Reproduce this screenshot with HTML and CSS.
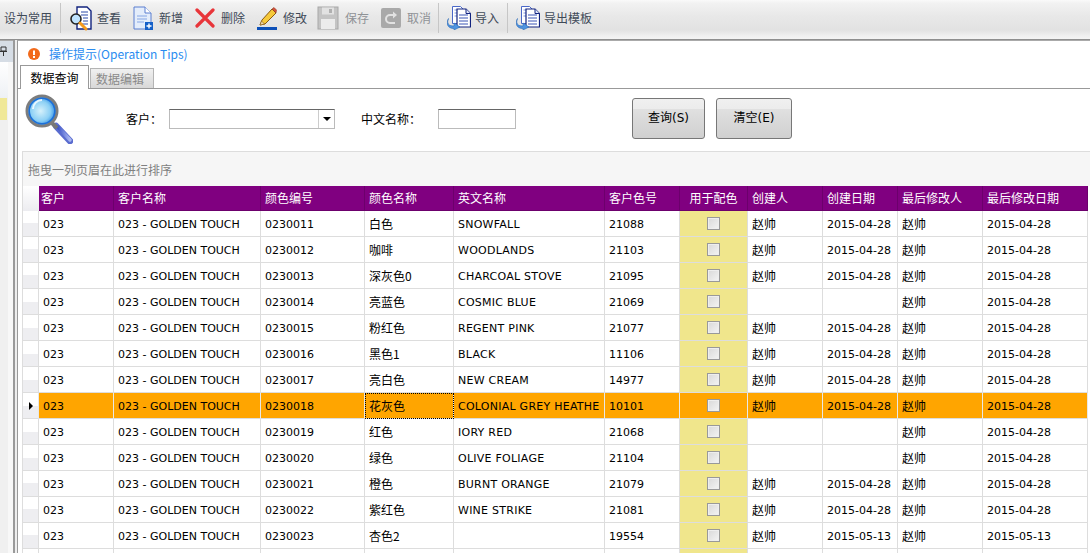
FILE: index.html
```html
<!DOCTYPE html>
<html lang="zh-CN">
<head>
<meta charset="utf-8">
<title>数据查询</title>
<link rel="stylesheet" href="styles.css">
</head>
<body>
<svg class="defs" width="0" height="0">
  <defs>
    <symbol id="ico-import" viewBox="0 0 24 24">
      <path d="M5.500 .5h8l3 3v14h-11z" fill="#fff" stroke="#4a68c8"/>
      <path d="M7.500 4h5M7.500 7h6M7.500 10h6" stroke="#7d95dc"/>
      <path d="M10 3h9l4.500 4.500V21H10z" fill="#fff" stroke="#12237e" stroke-width="1.200"/>
      <path d="M19 3v4.500h4.500" fill="#dfe6fa" stroke="#12237e"/>
      <path d="M12 9h9M12 12h9M12 15h9M12 18h9" stroke="#3a55b5"/>
      <path d="M1.500 12.500c-2 5 0 7.500 5.500 7.500v-3l6 4-6 3v-1.500c-6 0-8.500-4.500-5.500-10z" fill="#4f94e0" stroke="#2d6cb8" stroke-width=".6"/>
    </symbol>
  </defs>
</svg>
<div class="app">
  <header class="toolbar">
    <span class="tool first"><span class="t">设为常用</span></span>
    <i class="sep s1"></i>
    <span class="tool w-view">
      <svg class="ico i-view" viewBox="0 0 24 26"><path d="M8 2h10l4 4v18H8z" fill="#fff" stroke="#12237e" stroke-width="1.400"/><path d="M12 7h7M12 10h7M14 13h5M14 16h5M12 19h7" stroke="#2d4aa8" stroke-width="1.200"/><circle cx="7" cy="14" r="5" fill="#bfe3ff" stroke="#222" stroke-width="1.600"/><path d="M11 18l6 6" stroke="#f59a1c" stroke-width="3" stroke-linecap="round"/></svg>
      <span class="t">查看</span>
    </span>
    <span class="tool w-new">
      <svg class="ico i-new" viewBox="0 0 20 24"><path d="M1 1h11l6 6v16H1z" fill="#e4edfb" stroke="#5b7fd0"/><path d="M12 1v6h6" fill="#fff" stroke="#5b7fd0"/><path d="M4 10h10M4 13h10M4 16h7" stroke="#86a6e4"/><rect x="12" y="16" width="8" height="8" fill="#1560c8"/><path d="M16 17.500v5M13.500 20h5" stroke="#fff" stroke-width="1.400"/></svg>
      <span class="t">新增</span>
    </span>
    <span class="tool w-del">
      <svg class="ico i-del" viewBox="0 0 20 20"><path d="M2 2l16 16M18 2L2 18" stroke="#e8353a" stroke-width="3.200" stroke-linecap="round"/></svg>
      <span class="t">删除</span>
    </span>
    <span class="tool w-edit">
      <svg class="ico i-edit" viewBox="0 0 20 24"><path d="M5 14L15 3l4 4L8 18l-5 1z" fill="#f6c93a" stroke="#8a5a12"/><path d="M15 3l2-1.500 2.500 2.500-.5 3z" fill="#d8503c" stroke="#8a3a22" stroke-width=".6"/><path d="M3 19l1.500-4 3 3z" fill="#f3dcb0" stroke="#8a5a12" stroke-width=".6"/><rect x="0" y="21" width="20" height="3" fill="#0d50b8"/></svg>
      <span class="t">修改</span>
    </span>
    <span class="tool w-save off">
      <svg class="ico i-save" viewBox="0 0 22 24"><rect x="1" y="1" width="20" height="22" fill="#c4c4c4" stroke="#a8a8a8"/><rect x="5" y="1.500" width="12" height="7" fill="#e2e2e2"/><rect x="12" y="3" width="3" height="4" fill="#b0b0b0"/><rect x="4" y="13" width="14" height="10" fill="#ececec"/></svg>
      <span class="t">保存</span>
    </span>
    <span class="tool w-undo off">
      <svg class="ico i-undo" viewBox="0 0 20 20"><rect width="20" height="20" rx="2" fill="#a9a9a9"/><path d="M14 7H9a4 4 0 0 0 0 8h5" fill="none" stroke="#e2e2e2" stroke-width="2"/><path d="M12 3.500l4 3.500-4 3.500z" fill="#e2e2e2"/></svg>
      <span class="t">取消</span>
    </span>
    <i class="sep s2"></i>
    <span class="tool w-imp">
      <svg class="ico i-imp"><use href="#ico-import"/></svg>
      <span class="t">导入</span>
    </span>
    <i class="sep s3"></i>
    <span class="tool w-exp">
      <svg class="ico i-imp"><use href="#ico-import"/></svg>
      <span class="t">导出模板</span>
    </span>
  </header>

  <div class="main">
    <aside class="side">
      <div class="side-head">
        <svg class="pin" viewBox="0 0 7 10"><path d="M1 1h5v4H1zM0 5.500h7M3.500 5.500V10" fill="none" stroke="#333"/></svg>
      </div>
      <div class="side-body">
        <div class="side-light"></div>
        <div class="side-pick"></div>
      </div>
    </aside>
    <div class="splitter"></div>

    <section class="panel">
      <div class="tips">
        <svg class="tip-ico" viewBox="0 0 12 12"><circle cx="6" cy="6" r="6" fill="#f26a1b"/><rect x="5" y="2.500" width="2" height="4.500" fill="#fff"/><rect x="5" y="8" width="2" height="2" fill="#fff"/></svg>
        <span class="tip-text">操作提示(Operation Tips)</span>
      </div>
      <nav class="tabs">
        <span class="tab active">数据查询</span>
        <span class="tab next">数据编辑</span>
      </nav>

      <div class="filter">
        <svg class="lens" viewBox="0 0 48 50">
          <defs>
            <radialGradient id="gl" cx=".45" cy=".5" r=".55"><stop offset="0" stop-color="#d6f1fb"/><stop offset=".6" stop-color="#8cd0f5"/><stop offset="1" stop-color="#1c7fe0"/></radialGradient>
            <linearGradient id="gh" x1="0" y1="0" x2="1" y2="0"><stop offset="0" stop-color="#3f56c8"/><stop offset="1" stop-color="#aab8f2"/></linearGradient>
          </defs>
          <path d="M31 32l14 15" stroke="#5a6ccf" stroke-width="6.500" stroke-linecap="round"/>
          <path d="M33 33l12 13" stroke="url(#gh)" stroke-width="3.500" stroke-linecap="round"/>
          <path d="M27 29l5 5" stroke="#777" stroke-width="4"/>
          <circle cx="17" cy="17" r="15" fill="url(#gl)" stroke="#7d7d7d" stroke-width="3"/>
          <circle cx="17" cy="17" r="12.800" fill="none" stroke="#1c6fd8" stroke-width="1.600"/>
          <path d="M8 15a9 9 0 0 1 9-9" fill="none" stroke="#fff" stroke-width="2" opacity=".8"/>
        </svg>
        <label class="lbl lbl-cust">客户：</label>
        <div class="combo"><span class="combo-btn"><i class="caret"></i></span></div>
        <label class="lbl lbl-cn">中文名称：</label>
        <div class="textbox"></div>
        <button class="btn btn-q">查询(S)</button>
        <button class="btn btn-c">清空(E)</button>
      </div>

      <div class="grid">
        <div class="group">拖曳一列页眉在此进行排序</div>
        <table class="table">
          <colgroup>
            <col class="c0"><col class="c1"><col class="c2"><col class="c3"><col class="c4"><col class="c5"><col class="c6"><col class="c7"><col class="c8"><col class="c9"><col class="c10"><col class="c11">
          </colgroup>
          <thead>
            <tr><th class="corner"></th><th class="firstcol">客户</th><th>客户名称</th><th>颜色编号</th><th>颜色名称</th><th>英文名称</th><th>客户色号</th><th class="mid">用于配色</th><th>创建人</th><th>创建日期</th><th>最后修改人</th><th>最后修改日期</th></tr>
          </thead>
          <tbody>
            <tr><td class="rh"></td><td class="l">023</td><td class="l">023 - GOLDEN TOUCH</td><td class="l">0230011</td><td>白色</td><td class="l en">SNOWFALL</td><td class="l">21088</td><td class="chk"><i class="box"></i></td><td>赵帅</td><td class="l">2015-04-28</td><td>赵帅</td><td class="l">2015-04-28</td></tr>
            <tr><td class="rh"></td><td class="l">023</td><td class="l">023 - GOLDEN TOUCH</td><td class="l">0230012</td><td>咖啡</td><td class="l en">WOODLANDS</td><td class="l">21103</td><td class="chk"><i class="box"></i></td><td>赵帅</td><td class="l">2015-04-28</td><td>赵帅</td><td class="l">2015-04-28</td></tr>
            <tr><td class="rh"></td><td class="l">023</td><td class="l">023 - GOLDEN TOUCH</td><td class="l">0230013</td><td>深灰色0</td><td class="l en">CHARCOAL STOVE</td><td class="l">21095</td><td class="chk"><i class="box"></i></td><td>赵帅</td><td class="l">2015-04-28</td><td>赵帅</td><td class="l">2015-04-28</td></tr>
            <tr><td class="rh"></td><td class="l">023</td><td class="l">023 - GOLDEN TOUCH</td><td class="l">0230014</td><td>亮蓝色</td><td class="l en">COSMIC BLUE</td><td class="l">21069</td><td class="chk"><i class="box"></i></td><td></td><td class="l"></td><td>赵帅</td><td class="l">2015-04-28</td></tr>
            <tr><td class="rh"></td><td class="l">023</td><td class="l">023 - GOLDEN TOUCH</td><td class="l">0230015</td><td>粉红色</td><td class="l en">REGENT PINK</td><td class="l">21077</td><td class="chk"><i class="box"></i></td><td>赵帅</td><td class="l">2015-04-28</td><td>赵帅</td><td class="l">2015-04-28</td></tr>
            <tr><td class="rh"></td><td class="l">023</td><td class="l">023 - GOLDEN TOUCH</td><td class="l">0230016</td><td>黑色1</td><td class="l en">BLACK</td><td class="l">11106</td><td class="chk"><i class="box"></i></td><td>赵帅</td><td class="l">2015-04-28</td><td>赵帅</td><td class="l">2015-04-28</td></tr>
            <tr><td class="rh"></td><td class="l">023</td><td class="l">023 - GOLDEN TOUCH</td><td class="l">0230017</td><td>亮白色</td><td class="l en">NEW CREAM</td><td class="l">14977</td><td class="chk"><i class="box"></i></td><td>赵帅</td><td class="l">2015-04-28</td><td>赵帅</td><td class="l">2015-04-28</td></tr>
            <tr class="sel"><td class="rh"><i class="arrow"></i></td><td class="l">023</td><td class="l">023 - GOLDEN TOUCH</td><td class="l">0230018</td><td class="focus">花灰色</td><td class="l en">COLONIAL GREY HEATHE</td><td class="l">10101</td><td class="chk"><i class="box"></i></td><td>赵帅</td><td class="l">2015-04-28</td><td>赵帅</td><td class="l">2015-04-28</td></tr>
            <tr><td class="rh"></td><td class="l">023</td><td class="l">023 - GOLDEN TOUCH</td><td class="l">0230019</td><td>红色</td><td class="l en">IORY RED</td><td class="l">21068</td><td class="chk"><i class="box"></i></td><td></td><td class="l"></td><td>赵帅</td><td class="l">2015-04-28</td></tr>
            <tr><td class="rh"></td><td class="l">023</td><td class="l">023 - GOLDEN TOUCH</td><td class="l">0230020</td><td>绿色</td><td class="l en">OLIVE FOLIAGE</td><td class="l">21104</td><td class="chk"><i class="box"></i></td><td></td><td class="l"></td><td>赵帅</td><td class="l">2015-04-28</td></tr>
            <tr><td class="rh"></td><td class="l">023</td><td class="l">023 - GOLDEN TOUCH</td><td class="l">0230021</td><td>橙色</td><td class="l en">BURNT ORANGE</td><td class="l">21079</td><td class="chk"><i class="box"></i></td><td>赵帅</td><td class="l">2015-04-28</td><td>赵帅</td><td class="l">2015-04-28</td></tr>
            <tr><td class="rh"></td><td class="l">023</td><td class="l">023 - GOLDEN TOUCH</td><td class="l">0230022</td><td>紫红色</td><td class="l en">WINE STRIKE</td><td class="l">21081</td><td class="chk"><i class="box"></i></td><td>赵帅</td><td class="l">2015-04-28</td><td>赵帅</td><td class="l">2015-04-28</td></tr>
            <tr><td class="rh"></td><td class="l">023</td><td class="l">023 - GOLDEN TOUCH</td><td class="l">0230023</td><td>杏色2</td><td class="l"></td><td class="l">19554</td><td class="chk"><i class="box"></i></td><td>赵帅</td><td class="l">2015-05-13</td><td>赵帅</td><td class="l">2015-05-13</td></tr>
            <tr><td class="rh"></td><td></td><td></td><td></td><td></td><td></td><td></td><td class="chk"></td><td></td><td></td><td></td><td></td></tr>
          </tbody>
        </table>
      </div>
    </section>
  </div>
</div>
</body>
</html>
```
FILE: styles.css
```css
* { box-sizing: border-box; }
html, body { margin: 0; padding: 0; height: 553px; overflow: hidden; background: #fff; }
body { font: 12px/16px "Noto Sans CJK SC", "Liberation Sans", sans-serif; color: #000; }
.defs { position: absolute; }
.app { width: 1090px; height: 553px; display: flex; flex-direction: column; overflow: hidden; }

/* toolbar */
.toolbar {
  height: 40px; flex: none; display: flex; align-items: center; padding-bottom: 4px;
  border-bottom: 1px solid #8f8f8f;
  background: linear-gradient(#fafafa 0, #f2f2f2 3px, #e8e8e8 16px, #e2e2e2 30px, #f0f0f0 36px, #f4f4f4 100%);
  color: #3f4a58;
}
.tool { display: flex; align-items: center; flex: none; }
.tool .t { white-space: nowrap; }
.tool.off { color: #8f9296; }
.first { margin-left: 4px; width: 56px; }
.sep { display: block; flex: none; width: 1px; height: 30px; background: #c6c6c6; }
.s1 { margin-right: 8px; }
.s2 { margin: 0 8px 0 7px; }
.s3 { margin: 0 8px; }
.ico { display: block; flex: none; }
.i-view { width: 24px; height: 26px; margin-right: 4px; }
.w-view { width: 64px; }
.i-new { width: 20px; height: 24px; margin-right: 6px; }
.w-new { width: 62px; }
.i-del { width: 20px; height: 20px; margin-right: 6px; }
.w-del { width: 62px; }
.i-edit { width: 20px; height: 24px; margin-right: 6px; }
.w-edit { width: 60px; }
.i-save { width: 22px; height: 24px; margin-right: 6px; }
.w-save { width: 64px; }
.i-undo { width: 20px; height: 20px; margin-right: 6px; }
.w-undo { width: 50px; }
.i-imp { width: 24px; height: 24px; margin-right: 4px; }

/* main area */
.main { flex: 1; display: flex; min-height: 0; }
.side { width: 13px; flex: none; display: flex; flex-direction: column; background: #f1f1f1; }
.side-head { height: 22px; flex: none; background: #d6dde5; border-top: 1px solid #aaa; overflow: hidden; }
.pin { display: block; width: 7px; height: 10px; margin-top: 5px; }
.side-body { flex: 1; background: linear-gradient(90deg, #f0f0f0 8px, #f8f8f8 8px); }
.side-light { height: 36px; width: 8px; background: linear-gradient(#fff, #eef1f5); }
.side-pick { height: 22px; width: 7px; background: #f0e898; }
.splitter { width: 4px; flex: none; background: linear-gradient(90deg, #9a9a9a 2px, #eee 2px); }

/* panel */
.panel { flex: 1; min-width: 0; border-left: 1px solid #999; border-top: 1px solid #aaa; background: #fff; display: flex; flex-direction: column; }
.tips { height: 24px; flex: none; display: flex; align-items: center; padding-left: 10px; padding-top: 2px; color: #2a8cf0; }
.tip-ico { width: 12px; height: 12px; margin-right: 9px; }
.tip-text { font-size: 12px; }
.tabs { height: 24px; flex: none; display: flex; align-items: flex-end; padding-left: 2px; border-bottom: 1px solid #999; }
.tab { height: 20px; width: 64px; margin-left: 1px; border: 1px solid #b4b4b4; border-bottom: 0; text-align: center; line-height: 19px; color: #8a8a8a; background: linear-gradient(#f0f0f0, #d8d8d8); }
.tab.next { padding-right: 4px; }
.tab.active { height: 24px; width: 69px; margin: 0 0 -1px; padding-top: 2px; border-color: #999; color: #000; background: #fff; }

.filter { height: 62px; flex: none; display: flex; align-items: flex-start; }
.lens { width: 48px; height: 50px; margin: 5px 0 0 7px; flex: none; }
.lbl { flex: none; line-height: 16px; white-space: nowrap; }
.lbl-cust { margin: 22px 0 0 53px; width: 43px; }
.lbl-cn { margin: 22px 0 0 26px; width: 77px; }
.combo { width: 166px; height: 20px; margin-top: 20px; flex: none; border: 1px solid #bbb; border-top-color: #666; display: flex; justify-content: flex-end; }
.combo-btn { width: 16px; border-left: 1px solid #ccc; display: flex; align-items: center; justify-content: center; }
.caret { width: 0; height: 0; border: 4px solid transparent; border-top: 4px solid #000; border-bottom: 0; }
.textbox { width: 78px; height: 20px; margin-top: 20px; flex: none; border: 1px solid #bbb; border-top-color: #666; }
.btn {
  height: 41px; margin-top: 9px; flex: none; padding: 0 0 2px; color: #000;
  font: 12px/16px "DejaVu Sans", "Noto Sans CJK SC", sans-serif;
  border: 1px solid #777; border-radius: 3px;
  background: linear-gradient(#f0f0f0 0, #ececec 25%, #e0e0e0 26%, #d0d0d0 100%);
}
.btn-q { width: 73px; margin-left: 116px; }
.btn-c { width: 76px; margin-left: 11px; }

/* grid */
.grid { flex: 1; min-height: 0; margin-left: 4px; border-top: 1px solid #ddd; border-left: 1px solid #ddd; overflow: hidden; }
.group { height: 34px; padding: 10px 0 0 5px; background: #f6f6f6; color: #808080; }
.table { table-layout: fixed; width: 1065px; border-collapse: separate; border-spacing: 0; }
.c0 { width: 16px; } .c1 { width: 75px; } .c2 { width: 147px; } .c3 { width: 104px; }
.c4 { width: 89px; } .c5 { width: 151px; } .c6 { width: 75px; } .c7 { width: 68px; }
.c8 { width: 75px; } .c9 { width: 75px; } .c10 { width: 85px; } .c11 { width: 105px; }
th {
  height: 25px; padding: 0 0 0 4px; text-align: left; font-weight: 400; color: #fff; background: #800080;
  border-right: 1px solid #6c006c; border-bottom: 1px solid #6c006c; white-space: nowrap; overflow: hidden;
}
th.firstcol { padding-left: 2px; }
th.mid { text-align: center; padding: 0; }
th.corner { background: linear-gradient(#fff, #ececf0); border: 0; }
td {
  height: 26px; padding: 0 0 0 4px; border-right: 1px solid #ddd; border-bottom: 1px solid #ddd;
  white-space: nowrap; overflow: hidden; color: #000;
}
td.l { padding-top: 3px; font-family: "DejaVu Sans", "Liberation Sans", sans-serif; font-size: 11px; }
td.en { letter-spacing: .25px; }
td.rh { padding: 0; background: linear-gradient(#fff 50%, #eeeef1 50%); position: relative; }
td.chk { background: #f0e68c; padding: 0; }
.box { display: block; width: 13px; height: 13px; margin: 0 auto; border: 1px solid #999; background: linear-gradient(135deg, #d8d8d8, #f4f4f4); box-shadow: inset 0 0 0 1px #eee; }
.sel td { background: #ffa500; border-right-color: #e8e8e8; }
.sel td.rh { background: linear-gradient(#fff 50%, #eeeef1 50%); }
.sel td.chk { background: #ffa500; }
.sel td.focus { outline: 1px dotted #000; outline-offset: -1px; }
.arrow { display: block; width: 0; height: 0; margin-left: 6px; border: 4px solid transparent; border-left: 4px solid #000; border-right: 0; }
```
